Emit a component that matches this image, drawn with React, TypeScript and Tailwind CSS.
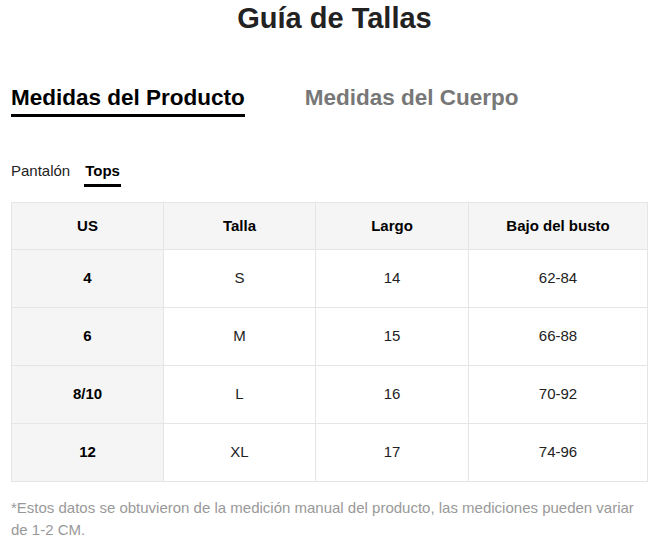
const rows = [
  ['4', 'S', '14', '62-84'],
  ['6', 'M', '15', '66-88'],
  ['8/10', 'L', '16', '70-92'],
  ['12', 'XL', '17', '74-96'],
]

export default function App() {
  return (
    <div className="min-h-[547px] w-[655px] bg-white font-['Liberation_Sans',Arial,sans-serif] text-[#222]">
      <h1 className="pl-[14px] pt-[1px] text-center text-[29px] font-bold leading-[34px] text-[#222]">Guía de Tallas</h1>

      {/* pestañas principales */}
      <div className="mt-[49px] flex gap-[60px] px-[11px]">
        <div className="border-b-[3px] border-black pb-[2px] text-[22.5px] font-bold leading-[28px] text-black">
          Medidas del Producto
        </div>
        <div className="text-[22.5px] font-bold leading-[28px] text-[#777]">Medidas del Cuerpo</div>
      </div>

      {/* sub pestañas */}
      <div className="mt-[43px] flex gap-[15px] px-[11px] text-[15px] leading-[21px]">
        <div className="pb-[3px] text-[#222]">Pantalón</div>
        <div className="-mx-px border-b-[3px] border-black px-px pb-[3px] font-bold text-black">Tops</div>
      </div>

      <div className="mt-[15px] px-[11px]">
        <table className="w-[636px] table-fixed border-collapse text-center text-[15px]">
          <colgroup>
            <col className="w-[152px]" />
            <col className="w-[152px]" />
            <col className="w-[153px]" />
            <col className="w-[179px]" />
          </colgroup>
          <thead>
            <tr className="h-[47px] bg-[#f5f5f5]">
              {['US', 'Talla', 'Largo', 'Bajo del busto'].map((h) => (
                <th key={h} className="border border-[#e5e5e5] font-bold text-black">
                  {h}
                </th>
              ))}
            </tr>
          </thead>
          <tbody>
            {rows.map((r) => (
              <tr key={r[0]} className="h-[58px]">
                <td className="border border-[#e5e5e5] bg-[#f5f5f5] font-bold text-black">{r[0]}</td>
                <td className="border border-[#e5e5e5] text-[#222]">{r[1]}</td>
                <td className="border border-[#e5e5e5] text-[#222]">{r[2]}</td>
                <td className="border border-[#e5e5e5] text-[#222]">{r[3]}</td>
              </tr>
            ))}
          </tbody>
        </table>
      </div>

      <p className="mt-[15px] px-[11px] text-[15px] leading-[22px] text-[#999]">
        *Estos datos se obtuvieron de la medición manual del producto, las mediciones pueden variar de 1-2 CM.
      </p>
    </div>
  )
}
